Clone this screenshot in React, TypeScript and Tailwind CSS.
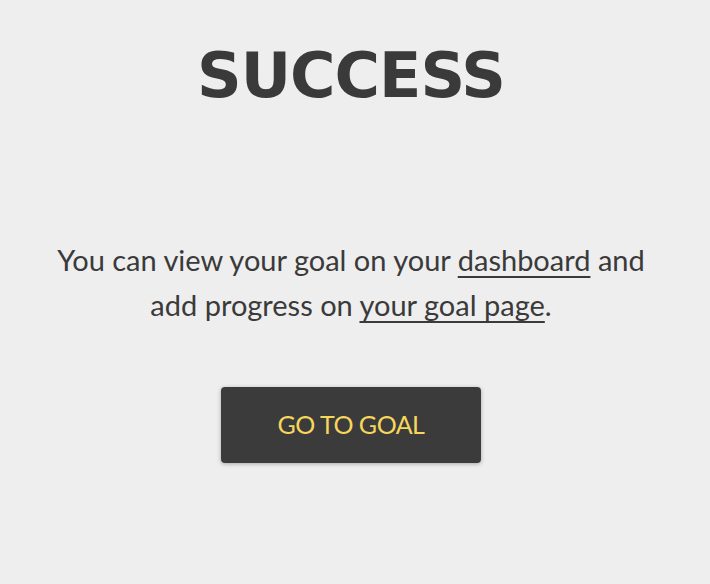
export default function App() {
  return (
    <div className="min-h-[584px] w-full bg-[#eeeeee] flex flex-col items-center pr-[8px] text-[#3a3a3a]">
      <h1
        className="mt-[40px] text-[62px] leading-[72px] font-bold tracking-[-1px] text-[#3a3a3a]"
        style={{ fontFamily: '"DejaVu Sans", sans-serif' }}
      >
        SUCCESS
      </h1>
      <p
        className="mt-[125px] text-center text-[29px] leading-[45px] whitespace-nowrap"
        style={{ fontFamily: 'Lato, sans-serif' }}
      >
        You can view your goal on your{" "}
        <a href="#" className="underline underline-offset-[5px] decoration-2">
          dashboard
        </a>{" "}
        and
        <br />
        add progress on{" "}
        <a href="#" className="underline underline-offset-[5px] decoration-2">
          your goal page
        </a>
        .
      </p>
      <button
        className="mt-[60px] w-[260px] h-[76px] rounded-[4px] bg-[#3b3b3b] text-[#f7d65c] text-[25px] tracking-[-0.5px] shadow-[0_1px_4px_rgba(0,0,0,0.3)]"
        style={{ fontFamily: 'Lato, sans-serif' }}
      >
        GO TO GOAL
      </button>
    </div>
  );
}
